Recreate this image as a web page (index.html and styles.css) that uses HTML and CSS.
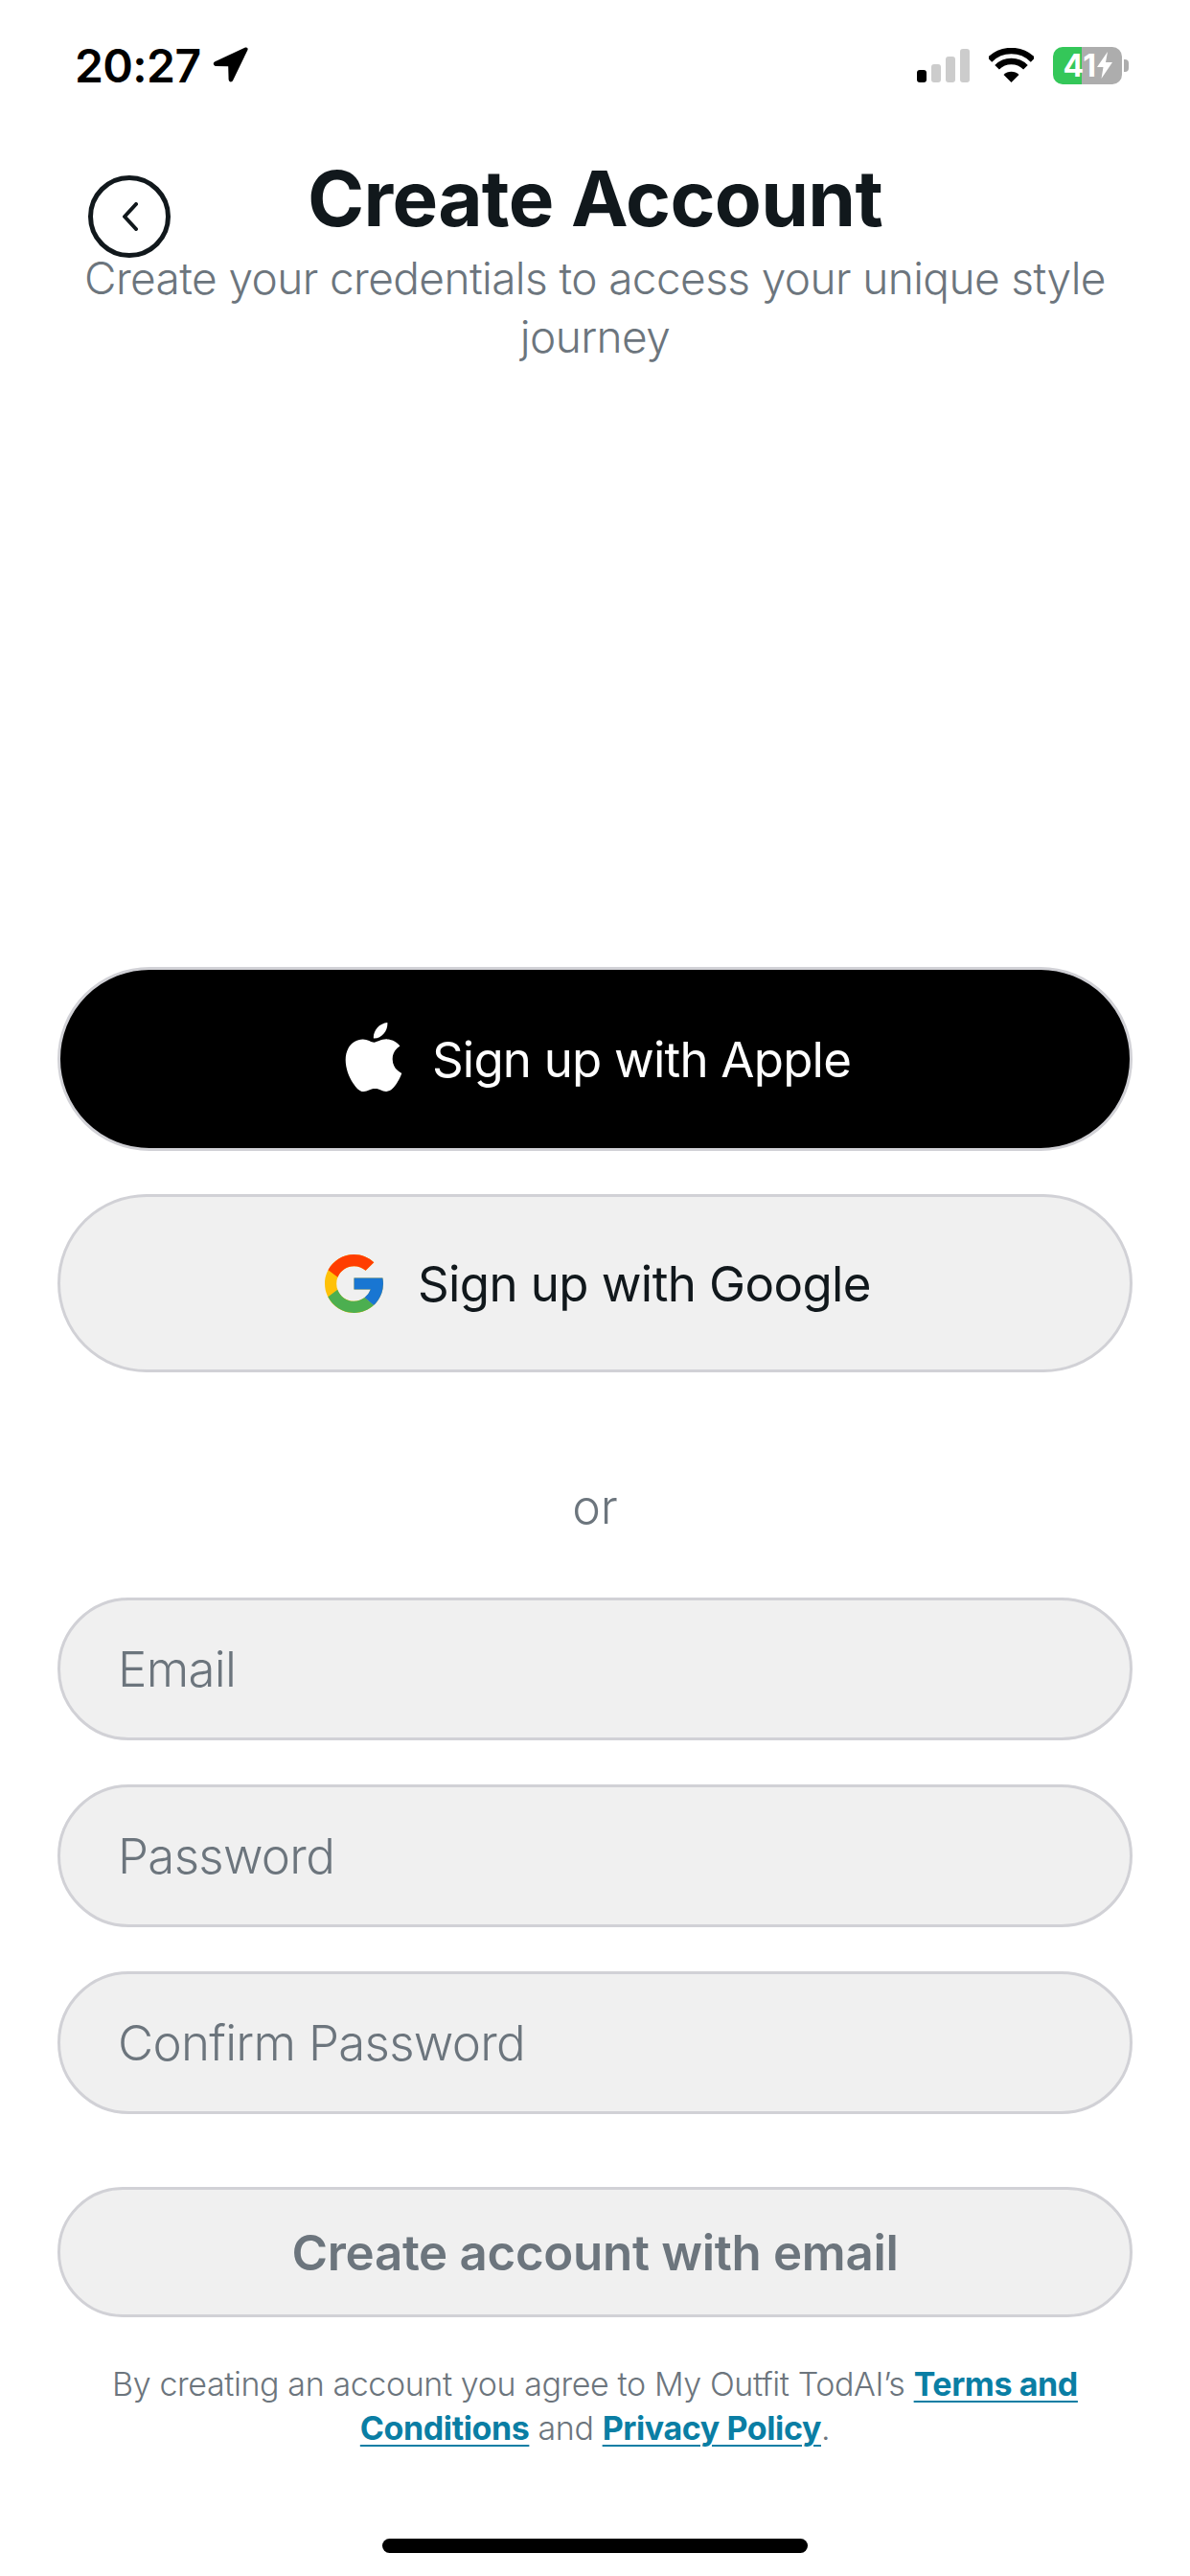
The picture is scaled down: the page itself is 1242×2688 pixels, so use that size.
FILE: index.html
```html
<!DOCTYPE html>
<html lang="en">

<head>
    <meta charset="UTF-8">
    <meta name="viewport" content="width=device-width, initial-scale=1.0">
    <title>Create Account</title>
    <link rel="stylesheet" href="styles.css">
</head>

<body>
    <!-- Status bar -->
    <div class="status-bar">
        <div class="status-left">
            <span class="clock">20:27</span>
            <svg class="arrow" viewBox="0 0 37 37"><path d="M34 .6 2.400 15.200c-2.600 1.200-1.900 4.600.9 4.700l12.900.3.4 13.600c.1 2.900 3.400 3.600 4.600 1L36.400 3.200C37.200 1.300 35.800-.2 34 .6z"/></svg>
        </div>
        <div class="status-right">
            <div class="signal">
                <span class="bar bar-on bar-1"></span>
                <span class="bar bar-2"></span>
                <span class="bar bar-3"></span>
                <span class="bar bar-4"></span>
            </div>
            <svg class="wifi" viewBox="0 0 47 36">
                <path d="M.9 12.400a32 32 0 0 1 45.200 0" fill="none" stroke="#000" stroke-width="6.500"/>
                <path d="M8.600 20.200a21 21 0 0 1 29.800 0" fill="none" stroke="#000" stroke-width="6.500"/>
                <path d="M23.500 36 15.500 28a11.300 11.300 0 0 1 16 0z"/>
            </svg>
            <div class="battery">
                <span class="battery-num">41</span>
                <svg class="bolt" viewBox="0 0 16 28"><path d="M11 0 0 16h6.500L4.500 28 16 11H9z"/></svg>
            </div>
            <span class="battery-cap"></span>
        </div>
    </div>

    <div class="container">
        <!-- Header -->
        <div class="header">
            <button class="back-btn" type="button">
                <svg viewBox="0 0 17 30" width="17" height="30"><path d="M15 2 3 15l12 13" fill="none" stroke="#11181c" stroke-width="4" stroke-linecap="round" stroke-linejoin="round"/></svg>
            </button>
            <h1>Create Account</h1>
            <span></span>
        </div>
        <p class="subtitle">Create your credentials to access your unique style journey</p>

        <!-- Social sign up -->
        <button class="btn btn-apple" type="button">
            <svg class="apple-icon" viewBox="0 0 24 24"><path d="M12.152 6.896c-.948 0-2.415-1.078-3.960-1.040-2.040.027-3.910 1.183-4.961 3.014-2.117 3.675-.546 9.103 1.519 12.090 1.013 1.454 2.208 3.090 3.792 3.039 1.520-.065 2.090-.987 3.935-.987 1.831 0 2.350.987 3.960.948 1.637-.026 2.676-1.480 3.676-2.948 1.156-1.688 1.636-3.325 1.662-3.415-.039-.013-3.182-1.221-3.220-4.857-.026-3.040 2.480-4.494 2.597-4.559-1.429-2.090-3.623-2.324-4.390-2.376-2-.156-3.675 1.090-4.610 1.090zM15.530 3.830c.843-1.012 1.400-2.427 1.245-3.830-1.207.052-2.662.805-3.532 1.818-.780.896-1.454 2.338-1.273 3.714 1.338.104 2.715-.688 3.559-1.701"/></svg>
            <span>Sign up with Apple</span>
        </button>
        <button class="btn btn-google" type="button">
            <svg class="google-icon" viewBox="4 4 40 40">
                <path fill="#ffc107" d="M43.611 20.083H42V20H24v8h11.303c-1.649 4.657-6.080 8-11.303 8-6.627 0-12-5.373-12-12s5.373-12 12-12c3.059 0 5.842 1.154 7.961 3.039l5.657-5.657C34.046 6.053 29.268 4 24 4 12.955 4 4 12.955 4 24s8.955 20 20 20 20-8.955 20-20c0-1.341-.138-2.650-.389-3.917z"/>
                <path fill="#ff3d00" d="m6.306 14.691 6.571 4.819C14.655 15.108 18.961 12 24 12c3.059 0 5.842 1.154 7.961 3.039l5.657-5.657C34.046 6.053 29.268 4 24 4 16.318 4 9.656 8.337 6.306 14.691z"/>
                <path fill="#4caf50" d="M24 44c5.166 0 9.860-1.977 13.409-5.192l-6.190-5.238A11.910 11.910 0 0 1 24 36c-5.202 0-9.619-3.317-11.283-7.946l-6.522 5.025C9.505 39.556 16.227 44 24 44z"/>
                <path fill="#1976d2" d="M43.611 20.083H42V20H24v8h11.303a12.040 12.040 0 0 1-4.087 5.571l6.190 5.238C36.971 39.205 44 34 44 24c0-1.341-.138-2.650-.389-3.917z"/>
            </svg>
            <span>Sign up with Google</span>
        </button>

        <div class="or">or</div>

        <!-- Email form -->
        <form class="form">
            <input type="email" placeholder="Email">
            <input type="password" placeholder="Password">
            <input type="password" placeholder="Confirm Password">
            <button class="btn-submit" type="submit">Create account with email</button>
        </form>

        <p class="terms">By creating an account you agree to My Outfit TodAI’s <a href="#">Terms and</a><br><a href="#">Conditions</a> and <a href="#">Privacy Policy</a>.</p>
    </div>

    <div class="home-bar"></div>
</body>

</html>
```

FILE: styles.css
```css
body {
    font-family: Inter, "Noto Sans", sans-serif;
    margin: 0;
    padding: 0;
    width: 1242px;
    height: 2688px;
    overflow: hidden;
    background-color: #fff;
    color: #11181c;
}

/* status bar */
.status-bar {
    display: flex;
    justify-content: space-between;
    height: 48px;
    padding: 44px 64px 0 78px;
}

.status-left {
    display: flex;
    align-items: center;
    gap: 13px;
    height: 48px;
}

.clock {
    font-size: 48px;
    font-weight: 600;
    letter-spacing: -0.6px;
    color: #000;
}

.arrow {
    width: 37px;
    height: 37px;
    margin-top: -2px;
}

.status-right {
    display: flex;
    align-items: center;
    height: 48px;
}

.signal {
    display: flex;
    align-items: flex-end;
    gap: 5px;
    height: 35px;
    margin-right: 20px;
}

.bar {
    width: 10px;
    border-radius: 3px;
    background-color: #ccc;
}

.bar-on {
    background-color: #000;
}

.bar-1 {
    height: 13px;
}

.bar-2 {
    height: 19px;
}

.bar-3 {
    height: 27px;
}

.bar-4 {
    height: 35px;
}

.wifi {
    width: 47px;
    height: 36px;
    margin-right: 20px;
}

.battery {
    display: flex;
    align-items: center;
    justify-content: center;
    width: 72px;
    height: 39px;
    border-radius: 10px;
    background: linear-gradient(to right, #34c759 30px, #adadad 30px);
    color: #fff;
}

.battery-num {
    font-size: 32px;
    font-weight: 700;
    letter-spacing: 0.5px;
}

.bolt {
    width: 16px;
    height: 28px;
    fill: #fff;
}

.battery-cap {
    width: 5px;
    height: 13px;
    margin-left: 2px;
    border-radius: 0 4px 4px 0;
    background-color: #adadad;
}

/* page */
.container {
    padding: 0 60px;
}

.header {
    display: grid;
    grid-template-columns: 1fr auto 1fr;
    height: 109px;
    margin-top: 59px;
}

.back-btn {
    display: flex;
    align-items: center;
    justify-content: center;
    width: 86px;
    height: 86px;
    margin: 32px 0 0 32px;
    padding: 0;
    border: 5px solid #11181c;
    border-radius: 50%;
    background: transparent;
}

h1 {
    margin: 0;
    font-size: 80px;
    font-weight: 650;
    line-height: 112px;
    letter-spacing: -0.7px;
    color: #11181c;
}

.subtitle {
    margin: 0 auto;
    width: 1100px;
    font-size: 46px;
    font-weight: 300;
    line-height: 61px;
    letter-spacing: -0.6px;
    text-align: center;
    color: #6c757d;
}

.btn {
    display: flex;
    align-items: center;
    justify-content: center;
    box-sizing: border-box;
    width: 100%;
    font-family: inherit;
    font-size: 51px;
    letter-spacing: -0.6px;
    border: 3px solid #d1d1d6;
    border-radius: 96px;
}

.btn-apple {
    gap: 25px;
    height: 192px;
    margin-top: 627px;
    padding-right: 6px;
    letter-spacing: -0.8px;
    background-color: #000;
    color: #fff;
}

.apple-icon {
    width: 72px;
    height: 72px;
    fill: #fff;
    margin-top: -4px;
}

.btn-google {
    gap: 36px;
    height: 186px;
    margin-top: 45px;
    padding-left: 12px;
    background-color: #f0f0f0;
    color: #11181c;
}

.google-icon {
    width: 61px;
    height: 61px;
}

.or {
    margin-top: 112px;
    font-size: 50px;
    font-weight: 300;
    line-height: 56px;
    text-align: center;
    color: #6c757d;
}

.form {
    display: flex;
    flex-direction: column;
    gap: 46px;
    margin-top: 67px;
}

.form input {
    box-sizing: border-box;
    width: 100%;
    height: 149px;
    padding: 0 60px;
    font-family: inherit;
    font-size: 51px;
    font-weight: 350;
    letter-spacing: -0.7px;
    background-color: #f0f0f0;
    border: 3px solid #d1d1d6;
    border-radius: 75px;
    outline: none;
}

.form input::placeholder {
    color: #6c757d;
    opacity: 1;
}

.btn-submit {
    box-sizing: border-box;
    width: 100%;
    height: 136px;
    margin-top: 30px;
    font-family: inherit;
    font-size: 51px;
    font-weight: 600;
    letter-spacing: -0.3px;
    color: #6c757d;
    background-color: #f0f0f0;
    border: 3px solid #d1d1d6;
    border-radius: 68px;
}

.terms {
    margin: 47px auto 0;
    width: 1040px;
    font-size: 34px;
    font-weight: 300;
    line-height: 46px;
    letter-spacing: -0.4px;
    text-align: center;
    color: #6c757d;
}

.terms a {
    font-weight: 700;
    color: #0a7ea4;
    text-underline-offset: 5px;
    text-decoration-thickness: 2px;
}

.home-bar {
    width: 444px;
    height: 15px;
    margin: 92px auto 0;
    border-radius: 8px;
    background-color: #000;
}
```
